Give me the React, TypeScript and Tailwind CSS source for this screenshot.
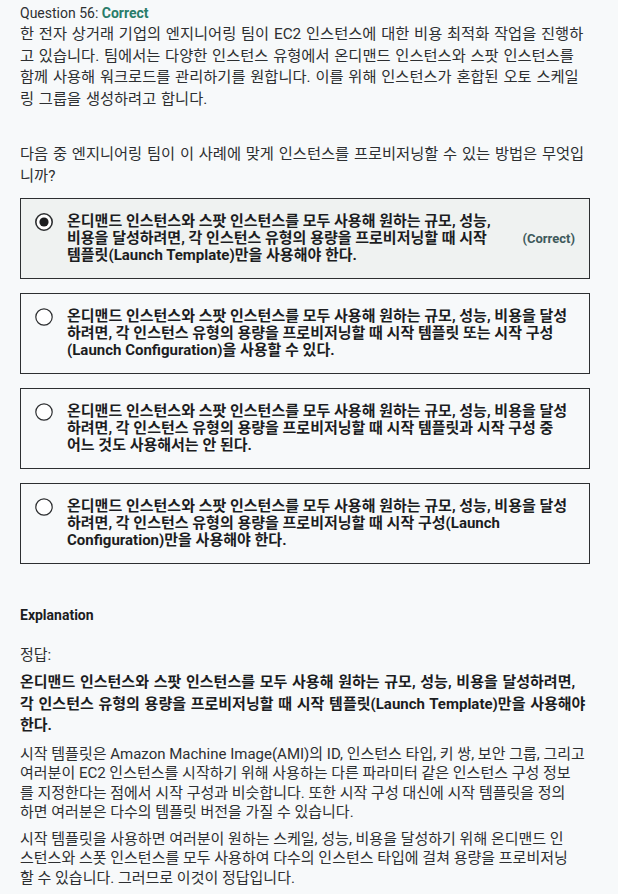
import React from 'react';

const FONT = "font-['Roboto','Noto_Sans_CJK_KR',sans-serif]";

// each entry is one rendered line, kept on its own row like the original wrap
function Lines({ lines }: { lines: React.ReactNode[] }) {
  return (
    <>
      {lines.map((l, i) => (
        <span key={i} className="block whitespace-nowrap">
          {l}
        </span>
      ))}
    </>
  );
}

type Option = {
  lines: React.ReactNode[];
  selected?: boolean;
  correct?: boolean;
};

const options: Option[] = [
  {
    selected: true,
    correct: true,
    lines: [
      '온디맨드 인스턴스와 스팟 인스턴스를 모두 사용해 원하는 규모, 성능,',
      '비용을 달성하려면, 각 인스턴스 유형의 용량을 프로비저닝할 때 시작',
      '템플릿(Launch Template)만을 사용해야 한다.',
    ],
  },
  {
    lines: [
      '온디맨드 인스턴스와 스팟 인스턴스를 모두 사용해 원하는 규모, 성능, 비용을 달성',
      '하려면, 각 인스턴스 유형의 용량을 프로비저닝할 때 시작 템플릿 또는 시작 구성',
      '(Launch Configuration)을 사용할 수 있다.',
    ],
  },
  {
    lines: [
      '온디맨드 인스턴스와 스팟 인스턴스를 모두 사용해 원하는 규모, 성능, 비용을 달성',
      '하려면, 각 인스턴스 유형의 용량을 프로비저닝할 때 시작 템플릿과 시작 구성 중',
      '어느 것도 사용해서는 안 된다.',
    ],
  },
  {
    lines: [
      '온디맨드 인스턴스와 스팟 인스턴스를 모두 사용해 원하는 규모, 성능, 비용을 달성',
      '하려면, 각 인스턴스 유형의 용량을 프로비저닝할 때 시작 구성(Launch',
      'Configuration)만을 사용해야 한다.',
    ],
  },
];

function Radio({ checked }: { checked?: boolean }) {
  return (
    <svg width="18" height="18" viewBox="0 0 18 18" className="shrink-0">
      <circle cx="9" cy="9" r="8.2" fill="white" stroke="#2d2f31" strokeWidth={checked ? 1.6 : 1.2} />
      {checked && <circle cx="9" cy="9" r="4.6" fill="#1c1d1f" />}
    </svg>
  );
}

function OptionBox({ option }: { option: Option }) {
  return (
    <div
      className={`flex items-start border border-[#2d2f31] px-[14px] py-[14px] ${
        option.selected ? 'bg-[#eff2f1]' : 'bg-transparent'
      }`}
    >
      <Radio checked={option.selected} />
      <div className="ml-[14px] text-[15px] leading-[17px] font-bold text-[#1c1d1f]">
        <Lines lines={option.lines} />
      </div>
      {option.correct && (
        <span className="ml-auto self-center text-[13px] font-bold text-[#3e5a5c]">(Correct)</span>
      )}
    </div>
  );
}

export default function App() {
  return (
    <div className={`min-h-screen bg-[#f7f9fa] text-[#2d2f31] ${FONT}`}>
      <div className="w-[570px] ml-5 pt-[3px] pb-6">
        <div className="text-[14px] leading-[20px]">
          Question 56: <span className="font-bold text-[#2a7d6a]">Correct</span>
        </div>

        <p className="mt-px text-[15.3px] leading-[21.7px] [word-spacing:1px]">
          <Lines
            lines={[
              '한 전자 상거래 기업의 엔지니어링 팀이 EC2 인스턴스에 대한 비용 최적화 작업을 진행하',
              '고 있습니다. 팀에서는 다양한 인스턴스 유형에서 온디맨드 인스턴스와 스팟 인스턴스를',
              '함께 사용해 워크로드를 관리하기를 원합니다. 이를 위해 인스턴스가 혼합된 오토 스케일',
              '링 그룹을 생성하려고 합니다.',
            ]}
          />
        </p>

        <p className="mt-[33px] text-[15.3px] leading-[21.7px] [word-spacing:1px]">
          <Lines
            lines={['다음 중 엔지니어링 팀이 이 사례에 맞게 인스턴스를 프로비저닝할 수 있는 방법은 무엇입', '니까?']}
          />
        </p>

        <div className="mt-[11px] flex flex-col gap-[14px]">
          {options.map((o, i) => (
            <OptionBox key={i} option={o} />
          ))}
        </div>

        <h3 className="mt-[41px] text-[14px] leading-[20px] font-bold text-[#1c1d1f]">Explanation</h3>

        <p className="mt-[20px] text-[15px] leading-[20px]">정답:</p>

        <p className="mt-[7px] text-[15px] leading-[21.5px] font-bold text-[#1c1d1f] [word-spacing:1px]">
          <Lines
            lines={[
              '온디맨드 인스턴스와 스팟 인스턴스를 모두 사용해 원하는 규모, 성능, 비용을 달성하려면,',
              '각 인스턴스 유형의 용량을 프로비저닝할 때 시작 템플릿(Launch Template)만을 사용해야',
              '한다.',
            ]}
          />
        </p>

        <p className="mt-[8px] text-[15px] leading-[19.5px]">
          <Lines
            lines={[
              '시작 템플릿은 Amazon Machine Image(AMI)의 ID, 인스턴스 타입, 키 쌍, 보안 그룹, 그리고',
              '여러분이 EC2 인스턴스를 시작하기 위해 사용하는 다른 파라미터 같은 인스턴스 구성 정보',
              '를 지정한다는 점에서 시작 구성과 비슷합니다. 또한 시작 구성 대신에 시작 템플릿을 정의',
              '하면 여러분은 다수의 템플릿 버전을 가질 수 있습니다.',
            ]}
          />
        </p>

        <p className="mt-[7px] text-[15px] leading-[19.5px]">
          <Lines
            lines={[
              '시작 템플릿을 사용하면 여러분이 원하는 스케일, 성능, 비용을 달성하기 위해 온디맨드 인',
              '스턴스와 스폿 인스턴스를 모두 사용하여 다수의 인스턴스 타입에 걸쳐 용량을 프로비저닝',
              '할 수 있습니다. 그러므로 이것이 정답입니다.',
            ]}
          />
        </p>
      </div>
    </div>
  );
}
